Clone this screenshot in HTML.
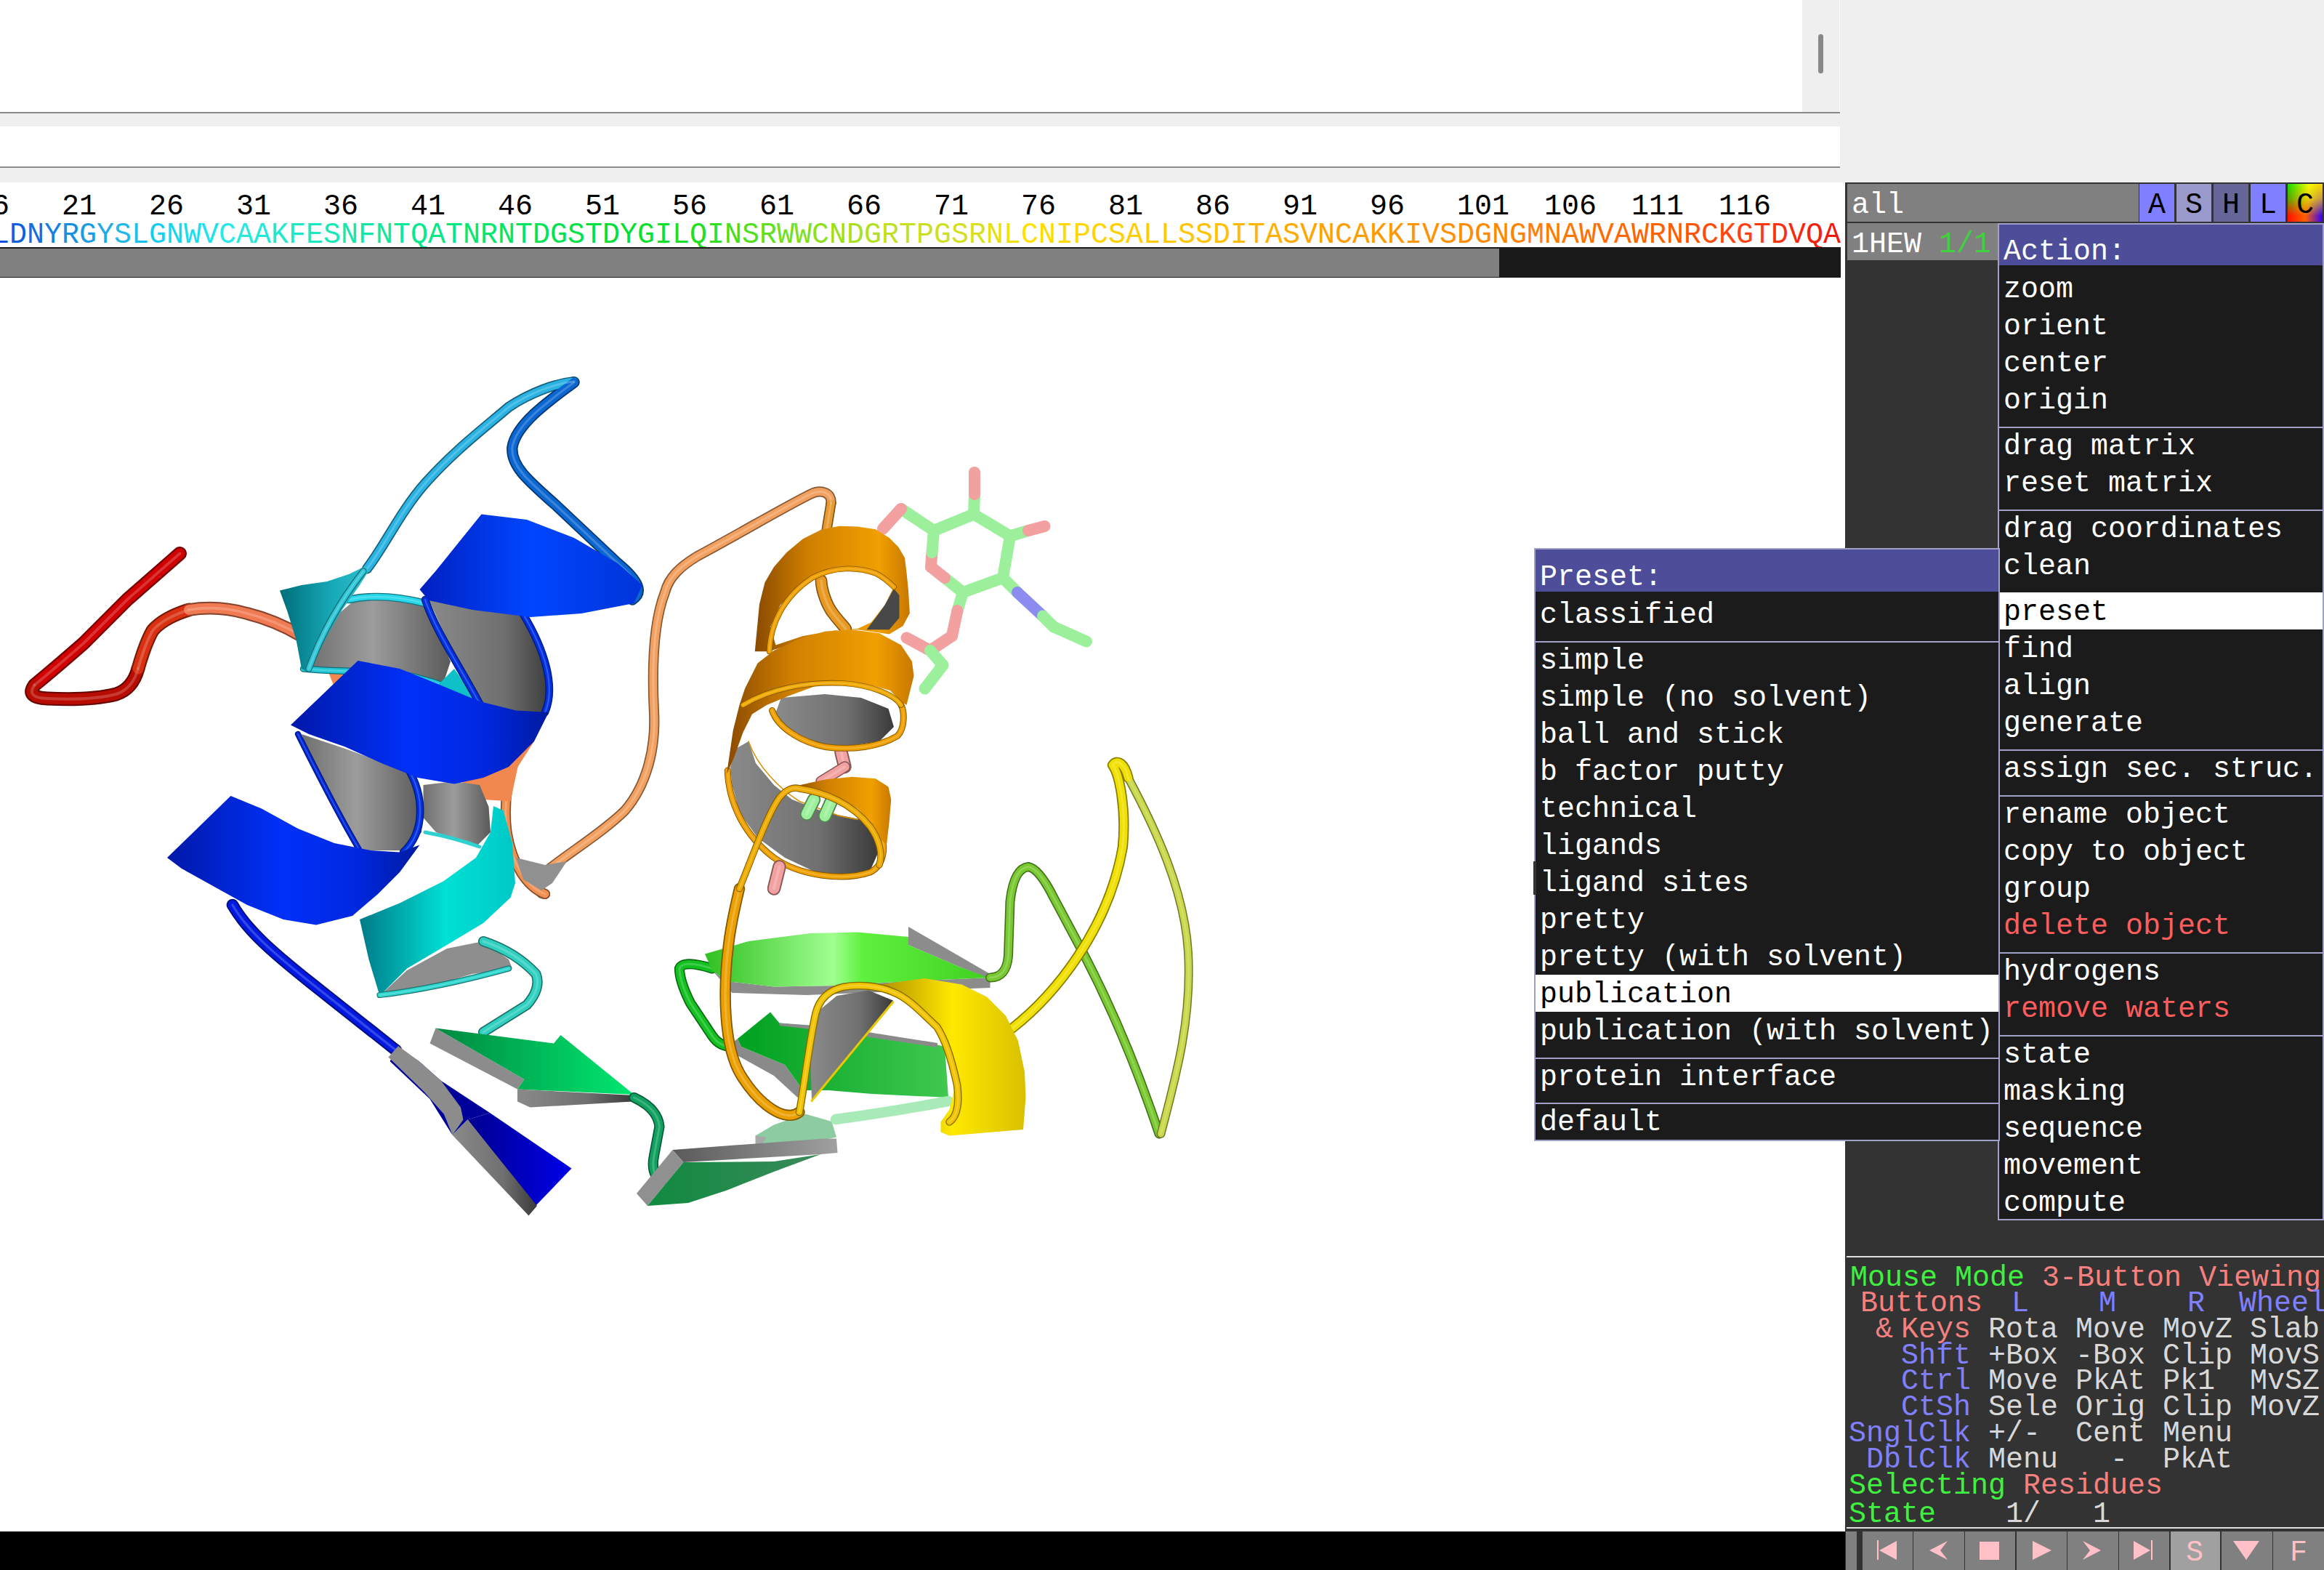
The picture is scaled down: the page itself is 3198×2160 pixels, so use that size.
<!DOCTYPE html><html><head><meta charset="utf-8"><style>
*{margin:0;padding:0;box-sizing:border-box}
html,body{width:3198px;height:2160px;overflow:hidden;background:#efefef}
.a{position:absolute}
.t{position:absolute;font-family:"Liberation Mono",monospace;font-size:40px;line-height:40px;white-space:pre;height:40px}
</style></head><body><div class="a" style="left:0;top:0;width:2480px;height:154px;background:#fff"></div><div class="a" style="left:2480px;top:0;width:51px;height:154px;background:#efefef"></div><div class="a" style="left:2531px;top:0;width:1px;height:154px;background:#fff"></div><div class="a" style="left:2502px;top:47px;width:7px;height:54px;background:#888;border-radius:4px"></div><div class="a" style="left:0;top:154px;width:2532px;height:2px;background:#8a8a8a"></div><div class="a" style="left:0;top:174px;width:2532px;height:55px;background:#fff"></div><div class="a" style="left:0;top:229px;width:2532px;height:2px;background:#8a8a8a"></div><div class="a" style="left:0;top:251px;width:2539px;height:1856px;background:#fff"></div><div class="t" style="left:-35px;top:265px;color:#000;">16</div><div class="t" style="left:85px;top:265px;color:#000;">21</div><div class="t" style="left:205px;top:265px;color:#000;">26</div><div class="t" style="left:325px;top:265px;color:#000;">31</div><div class="t" style="left:445px;top:265px;color:#000;">36</div><div class="t" style="left:565px;top:265px;color:#000;">41</div><div class="t" style="left:685px;top:265px;color:#000;">46</div><div class="t" style="left:805px;top:265px;color:#000;">51</div><div class="t" style="left:925px;top:265px;color:#000;">56</div><div class="t" style="left:1045px;top:265px;color:#000;">61</div><div class="t" style="left:1165px;top:265px;color:#000;">66</div><div class="t" style="left:1285px;top:265px;color:#000;">71</div><div class="t" style="left:1405px;top:265px;color:#000;">76</div><div class="t" style="left:1525px;top:265px;color:#000;">81</div><div class="t" style="left:1645px;top:265px;color:#000;">86</div><div class="t" style="left:1765px;top:265px;color:#000;">91</div><div class="t" style="left:1885px;top:265px;color:#000;">96</div><div class="t" style="left:2005px;top:265px;color:#000;">101</div><div class="t" style="left:2125px;top:265px;color:#000;">106</div><div class="t" style="left:2245px;top:265px;color:#000;">111</div><div class="t" style="left:2365px;top:265px;color:#000;">116</div><div class="t" style="left:-11px;top:304px;color:rgb(10,80,224);">L</div><div class="t" style="left:13px;top:304px;color:rgb(13,96,224);">D</div><div class="t" style="left:37px;top:304px;color:rgb(17,112,224);">N</div><div class="t" style="left:61px;top:304px;color:rgb(20,128,224);">Y</div><div class="t" style="left:85px;top:304px;color:rgb(24,144,224);">R</div><div class="t" style="left:109px;top:304px;color:rgb(26,157,226);">G</div><div class="t" style="left:133px;top:304px;color:rgb(29,170,229);">Y</div><div class="t" style="left:157px;top:304px;color:rgb(32,184,232);">S</div><div class="t" style="left:181px;top:304px;color:rgb(26,194,234);">L</div><div class="t" style="left:205px;top:304px;color:rgb(21,205,237);">G</div><div class="t" style="left:229px;top:304px;color:rgb(16,216,240);">N</div><div class="t" style="left:253px;top:304px;color:rgb(24,221,237);">W</div><div class="t" style="left:277px;top:304px;color:rgb(32,226,234);">V</div><div class="t" style="left:301px;top:304px;color:rgb(40,232,232);">C</div><div class="t" style="left:325px;top:304px;color:rgb(37,232,224);">A</div><div class="t" style="left:349px;top:304px;color:rgb(34,232,216);">A</div><div class="t" style="left:373px;top:304px;color:rgb(31,232,208);">K</div><div class="t" style="left:397px;top:304px;color:rgb(28,232,200);">F</div><div class="t" style="left:421px;top:304px;color:rgb(25,232,192);">E</div><div class="t" style="left:445px;top:304px;color:rgb(22,232,184);">S</div><div class="t" style="left:469px;top:304px;color:rgb(20,232,176);">N</div><div class="t" style="left:493px;top:304px;color:rgb(17,232,168);">F</div><div class="t" style="left:517px;top:304px;color:rgb(14,232,160);">N</div><div class="t" style="left:541px;top:304px;color:rgb(11,232,152);">T</div><div class="t" style="left:565px;top:304px;color:rgb(8,232,144);">Q</div><div class="t" style="left:589px;top:304px;color:rgb(5,232,136);">A</div><div class="t" style="left:613px;top:304px;color:rgb(2,232,128);">T</div><div class="t" style="left:637px;top:304px;color:rgb(0,232,120);">N</div><div class="t" style="left:661px;top:304px;color:rgb(0,231,112);">R</div><div class="t" style="left:685px;top:304px;color:rgb(0,230,104);">N</div><div class="t" style="left:709px;top:304px;color:rgb(0,229,96);">T</div><div class="t" style="left:733px;top:304px;color:rgb(0,228,88);">D</div><div class="t" style="left:757px;top:304px;color:rgb(0,227,80);">G</div><div class="t" style="left:781px;top:304px;color:rgb(0,226,72);">S</div><div class="t" style="left:805px;top:304px;color:rgb(0,225,64);">T</div><div class="t" style="left:829px;top:304px;color:rgb(0,224,56);">D</div><div class="t" style="left:853px;top:304px;color:rgb(0,224,48);">Y</div><div class="t" style="left:877px;top:304px;color:rgb(8,224,44);">G</div><div class="t" style="left:901px;top:304px;color:rgb(16,224,40);">I</div><div class="t" style="left:925px;top:304px;color:rgb(24,224,36);">L</div><div class="t" style="left:949px;top:304px;color:rgb(32,224,32);">Q</div><div class="t" style="left:973px;top:304px;color:rgb(48,224,32);">I</div><div class="t" style="left:997px;top:304px;color:rgb(64,224,32);">N</div><div class="t" style="left:1021px;top:304px;color:rgb(80,224,32);">S</div><div class="t" style="left:1045px;top:304px;color:rgb(96,224,32);">R</div><div class="t" style="left:1069px;top:304px;color:rgb(112,224,32);">W</div><div class="t" style="left:1093px;top:304px;color:rgb(128,224,32);">W</div><div class="t" style="left:1117px;top:304px;color:rgb(140,224,32);">C</div><div class="t" style="left:1141px;top:304px;color:rgb(153,224,32);">N</div><div class="t" style="left:1165px;top:304px;color:rgb(166,224,32);">D</div><div class="t" style="left:1189px;top:304px;color:rgb(179,224,32);">G</div><div class="t" style="left:1213px;top:304px;color:rgb(192,224,32);">R</div><div class="t" style="left:1237px;top:304px;color:rgb(196,224,32);">T</div><div class="t" style="left:1261px;top:304px;color:rgb(201,224,32);">P</div><div class="t" style="left:1285px;top:304px;color:rgb(206,224,32);">G</div><div class="t" style="left:1309px;top:304px;color:rgb(211,224,32);">S</div><div class="t" style="left:1333px;top:304px;color:rgb(216,224,32);">R</div><div class="t" style="left:1357px;top:304px;color:rgb(229,224,21);">N</div><div class="t" style="left:1381px;top:304px;color:rgb(242,224,10);">L</div><div class="t" style="left:1405px;top:304px;color:rgb(255,224,0);">C</div><div class="t" style="left:1429px;top:304px;color:rgb(255,220,0);">N</div><div class="t" style="left:1453px;top:304px;color:rgb(255,217,0);">I</div><div class="t" style="left:1477px;top:304px;color:rgb(255,214,0);">P</div><div class="t" style="left:1501px;top:304px;color:rgb(255,211,0);">C</div><div class="t" style="left:1525px;top:304px;color:rgb(255,208,0);">S</div><div class="t" style="left:1549px;top:304px;color:rgb(255,205,0);">A</div><div class="t" style="left:1573px;top:304px;color:rgb(255,202,0);">L</div><div class="t" style="left:1597px;top:304px;color:rgb(255,200,0);">L</div><div class="t" style="left:1621px;top:304px;color:rgb(255,197,0);">S</div><div class="t" style="left:1645px;top:304px;color:rgb(255,194,0);">S</div><div class="t" style="left:1669px;top:304px;color:rgb(255,192,0);">D</div><div class="t" style="left:1693px;top:304px;color:rgb(255,186,0);">I</div><div class="t" style="left:1717px;top:304px;color:rgb(255,181,0);">T</div><div class="t" style="left:1741px;top:304px;color:rgb(255,176,0);">A</div><div class="t" style="left:1765px;top:304px;color:rgb(255,170,0);">S</div><div class="t" style="left:1789px;top:304px;color:rgb(255,165,0);">V</div><div class="t" style="left:1813px;top:304px;color:rgb(255,160,0);">N</div><div class="t" style="left:1837px;top:304px;color:rgb(255,158,0);">C</div><div class="t" style="left:1861px;top:304px;color:rgb(255,156,0);">A</div><div class="t" style="left:1885px;top:304px;color:rgb(255,154,0);">K</div><div class="t" style="left:1909px;top:304px;color:rgb(255,152,0);">K</div><div class="t" style="left:1933px;top:304px;color:rgb(255,149,0);">I</div><div class="t" style="left:1957px;top:304px;color:rgb(255,146,0);">V</div><div class="t" style="left:1981px;top:304px;color:rgb(255,143,0);">S</div><div class="t" style="left:2005px;top:304px;color:rgb(255,140,0);">D</div><div class="t" style="left:2029px;top:304px;color:rgb(255,137,0);">G</div><div class="t" style="left:2053px;top:304px;color:rgb(255,134,0);">N</div><div class="t" style="left:2077px;top:304px;color:rgb(255,131,0);">G</div><div class="t" style="left:2101px;top:304px;color:rgb(255,128,0);">M</div><div class="t" style="left:2125px;top:304px;color:rgb(255,122,0);">N</div><div class="t" style="left:2149px;top:304px;color:rgb(255,117,0);">A</div><div class="t" style="left:2173px;top:304px;color:rgb(255,112,0);">W</div><div class="t" style="left:2197px;top:304px;color:rgb(255,108,0);">V</div><div class="t" style="left:2221px;top:304px;color:rgb(255,104,0);">A</div><div class="t" style="left:2245px;top:304px;color:rgb(255,100,0);">W</div><div class="t" style="left:2269px;top:304px;color:rgb(255,96,0);">R</div><div class="t" style="left:2293px;top:304px;color:rgb(255,89,3);">N</div><div class="t" style="left:2317px;top:304px;color:rgb(255,83,6);">R</div><div class="t" style="left:2341px;top:304px;color:rgb(255,76,9);">C</div><div class="t" style="left:2365px;top:304px;color:rgb(255,70,12);">K</div><div class="t" style="left:2389px;top:304px;color:rgb(255,64,16);">G</div><div class="t" style="left:2413px;top:304px;color:rgb(252,56,16);">T</div><div class="t" style="left:2437px;top:304px;color:rgb(249,48,16);">D</div><div class="t" style="left:2461px;top:304px;color:rgb(246,41,16);">V</div><div class="t" style="left:2485px;top:304px;color:rgb(243,33,16);">Q</div><div class="t" style="left:2509px;top:304px;color:rgb(240,26,16);">A</div><div class="a" style="left:0;top:340px;width:2533px;height:42px;background:#1a1a1a"></div><div class="a" style="left:0;top:342px;width:2063px;height:39px;background:#808080"></div><div class="a" style="left:0;top:2107px;width:2539px;height:53px;background:#000"></div><svg class="a" style="left:0;top:0" width="3198" height="2160" viewBox="0 0 3198 2160">
<defs>
<linearGradient id="gBlue" x1="0" y1="0" x2="1" y2="0">
 <stop offset="0" stop-color="#0018a8"/><stop offset="0.45" stop-color="#0030f8"/><stop offset="0.75" stop-color="#0028e0"/><stop offset="1" stop-color="#001aa0"/></linearGradient>
<linearGradient id="gBlue2" x1="0" y1="0" x2="1" y2="0">
 <stop offset="0" stop-color="#0020c0"/><stop offset="0.5" stop-color="#0046ff"/><stop offset="1" stop-color="#0034d8"/></linearGradient>
<linearGradient id="gGrey" x1="0" y1="0" x2="1" y2="0">
 <stop offset="0" stop-color="#707070"/><stop offset="0.45" stop-color="#9c9c9c"/><stop offset="1" stop-color="#5a5a5a"/></linearGradient>
<linearGradient id="gGreyD" x1="0" y1="0" x2="1" y2="0">
 <stop offset="0" stop-color="#8a8a8a"/><stop offset="0.6" stop-color="#707070"/><stop offset="1" stop-color="#3a3a3a"/></linearGradient>
<linearGradient id="gCyan" x1="0" y1="0" x2="1" y2="0">
 <stop offset="0" stop-color="#007a88"/><stop offset="0.55" stop-color="#00e0d4"/><stop offset="1" stop-color="#00c8c8"/></linearGradient>
<linearGradient id="gTeal" x1="0" y1="0" x2="1" y2="0">
 <stop offset="0" stop-color="#006e7a"/><stop offset="0.6" stop-color="#18aab8"/><stop offset="1" stop-color="#30c0d0"/></linearGradient>
<linearGradient id="gOrange" x1="0" y1="0" x2="1" y2="0">
 <stop offset="0" stop-color="#8a4a00"/><stop offset="0.35" stop-color="#d08000"/><stop offset="0.8" stop-color="#f0a000"/><stop offset="1" stop-color="#c87800"/></linearGradient>
<linearGradient id="gYellow" x1="0" y1="0" x2="1" y2="0">
 <stop offset="0" stop-color="#b09000"/><stop offset="0.5" stop-color="#ffe800"/><stop offset="1" stop-color="#d8c000"/></linearGradient>
<linearGradient id="gGreen1" x1="0" y1="0" x2="1" y2="0">
 <stop offset="0" stop-color="#30c020"/><stop offset="0.45" stop-color="#a0ff90"/><stop offset="0.55" stop-color="#60f040"/><stop offset="1" stop-color="#40d020"/></linearGradient>
<linearGradient id="gGreen2" x1="0" y1="0" x2="1" y2="0">
 <stop offset="0" stop-color="#00a020"/><stop offset="1" stop-color="#40c850"/></linearGradient>
<linearGradient id="gGreen3" x1="0" y1="0" x2="1" y2="0">
 <stop offset="0" stop-color="#008840"/><stop offset="1" stop-color="#00e870"/></linearGradient>
<linearGradient id="gNavy" x1="0" y1="0" x2="1" y2="0"><stop offset="0" stop-color="#000090"/><stop offset="1" stop-color="#0000e8"/></linearGradient>
<linearGradient id="gGreyL" x1="0" y1="0" x2="1" y2="0"><stop offset="0" stop-color="#5a5a5a"/><stop offset="1" stop-color="#a0a0a0"/></linearGradient>
<linearGradient id="gGreen4" x1="0" y1="0" x2="1" y2="0"><stop offset="0" stop-color="#108a40"/><stop offset="1" stop-color="#3a8a5a"/></linearGradient>
<linearGradient id="gRed" x1="0" y1="0" x2="1" y2="0">
 <stop offset="0" stop-color="#a00000"/><stop offset="0.2" stop-color="#c00000"/><stop offset="0.45" stop-color="#e03010"/><stop offset="0.7" stop-color="#f07050"/><stop offset="1" stop-color="#f08858"/></linearGradient>
</defs>
<g transform="translate(0,480) scale(0.5)"><path d="M 2287,425 C 2290,395 2260,385 2230,400 C 2150,440 2050,500 1920,570 C 1870,600 1840,630 1830,670 C 1795,760 1795,900 1800,1000 C 1805,1100 1780,1200 1720,1270 C 1660,1330 1560,1390 1500,1440 C 1470,1470 1480,1500 1500,1500" fill="none" stroke="#855834" stroke-width="28.4" stroke-linecap="round" stroke-linejoin="round"/><path d="M 2325,765 C 2290,740 2265,700 2262,640 C 2262,560 2280,470 2287,425" fill="none" stroke="#7f541a" stroke-width="28.4" stroke-linecap="round" stroke-linejoin="round"/><path d="M 2287,425 C 2290,395 2260,385 2230,400 C 2150,440 2050,500 1920,570 C 1870,600 1840,630 1830,670 C 1795,760 1795,900 1800,1000 C 1805,1100 1780,1200 1720,1270 C 1660,1330 1560,1390 1500,1440 C 1470,1470 1480,1500 1500,1500" fill="none" stroke="#f2a060" stroke-width="21.647999999999996" stroke-linecap="round" stroke-linejoin="round"/><path d="M 2325,765 C 2290,740 2265,700 2262,640 C 2262,560 2280,470 2287,425" fill="none" stroke="#e89a30" stroke-width="21.647999999999996" stroke-linecap="round" stroke-linejoin="round"/><path d="M 2287,425 C 2290,395 2260,385 2230,400 C 2150,440 2050,500 1920,570 C 1870,600 1840,630 1830,670 C 1795,760 1795,900 1800,1000 C 1805,1100 1780,1200 1720,1270 C 1660,1330 1560,1390 1500,1440 C 1470,1470 1480,1500 1500,1500" fill="none" stroke="#f8cfaf" stroke-width="5.808" stroke-linecap="round" stroke-linejoin="round" opacity="0.4"/><path d="M 2325,765 C 2290,740 2265,700 2262,640 C 2262,560 2280,470 2287,425" fill="none" stroke="#f3cc97" stroke-width="5.808" stroke-linecap="round" stroke-linejoin="round" opacity="0.4"/><path d="M 1500,1500 C 1450,1480 1410,1420 1395,1330 C 1385,1250 1395,1150 1450,1060" fill="none" stroke="#844f2c" stroke-width="28.4" stroke-linecap="round" stroke-linejoin="round"/><path d="M 1500,1500 C 1450,1480 1410,1420 1395,1330 C 1385,1250 1395,1150 1450,1060" fill="none" stroke="#f09050" stroke-width="21.647999999999996" stroke-linecap="round" stroke-linejoin="round"/><path d="M 1500,1500 C 1450,1480 1410,1420 1395,1330 C 1385,1250 1395,1150 1450,1060" fill="none" stroke="#f7c7a7" stroke-width="5.808" stroke-linecap="round" stroke-linejoin="round" opacity="0.4"/><polygon points="1420,1400 1500,1420 1560,1410 1520,1470 1490,1490 1440,1460" fill="#909090" /><polygon points="1270,1190 1350,1120 1455,1050 1470,1080 1425,1150 1405,1245 1330,1240" fill="#f08850" /><polygon points="900,880 960,880 990,960 1030,1000 960,1000 920,930" fill="#f08850" /><path d="M 495,563 L 350,690 L 230,810 Q 150,880 95,925" fill="none" stroke="#720000" stroke-width="38.0" stroke-linecap="round" stroke-linejoin="round"/><path d="M 95,925 Q 70,960 130,962 Q 250,968 320,950 Q 365,935 380,880" fill="none" stroke="#650600" stroke-width="38.0" stroke-linecap="round" stroke-linejoin="round"/><path d="M 380,880 Q 400,810 420,775 Q 450,740 520,718" fill="none" stroke="#761a08" stroke-width="38.0" stroke-linecap="round" stroke-linejoin="round"/><path d="M 520,718 Q 600,705 680,728 Q 760,748 830,790" fill="none" stroke="#84432d" stroke-width="35.6" stroke-linecap="round" stroke-linejoin="round"/><path d="M 495,563 L 350,690 L 230,810 Q 150,880 95,925" fill="none" stroke="#d00000" stroke-width="29.52" stroke-linecap="round" stroke-linejoin="round"/><path d="M 95,925 Q 70,960 130,962 Q 250,968 320,950 Q 365,935 380,880" fill="none" stroke="#b80c00" stroke-width="29.52" stroke-linecap="round" stroke-linejoin="round"/><path d="M 380,880 Q 400,810 420,775 Q 450,740 520,718" fill="none" stroke="#d83010" stroke-width="29.52" stroke-linecap="round" stroke-linejoin="round"/><path d="M 520,718 Q 600,705 680,728 Q 760,748 830,790" fill="none" stroke="#f07a52" stroke-width="27.552" stroke-linecap="round" stroke-linejoin="round"/><path d="M 495,563 L 350,690 L 230,810 Q 150,880 95,925" fill="none" stroke="#e77f7f" stroke-width="7.92" stroke-linecap="round" stroke-linejoin="round" opacity="0.4"/><path d="M 95,925 Q 70,960 130,962 Q 250,968 320,950 Q 365,935 380,880" fill="none" stroke="#db857f" stroke-width="7.92" stroke-linecap="round" stroke-linejoin="round" opacity="0.4"/><path d="M 380,880 Q 400,810 420,775 Q 450,740 520,718" fill="none" stroke="#eb9787" stroke-width="7.92" stroke-linecap="round" stroke-linejoin="round" opacity="0.4"/><path d="M 520,718 Q 600,705 680,728 Q 760,748 830,790" fill="none" stroke="#f7bca8" stroke-width="7.392" stroke-linecap="round" stroke-linejoin="round" opacity="0.4"/><path d="M 1010,605 C 1060,540 1100,450 1170,370 C 1250,280 1330,220 1400,160 C 1460,120 1530,95 1580,90" fill="none" stroke="#17617c" stroke-width="28.4" stroke-linecap="round" stroke-linejoin="round"/><path d="M 1580,92 C 1500,150 1420,210 1410,270 C 1405,320 1450,360 1530,430 L 1700,590 C 1760,640 1770,670 1740,690" fill="none" stroke="#053872" stroke-width="30.799999999999997" stroke-linecap="round" stroke-linejoin="round"/><path d="M 1010,605 C 1060,540 1100,450 1170,370 C 1250,280 1330,220 1400,160 C 1460,120 1530,95 1580,90" fill="none" stroke="#2ab2e2" stroke-width="21.647999999999996" stroke-linecap="round" stroke-linejoin="round"/><path d="M 1580,92 C 1500,150 1420,210 1410,270 C 1405,320 1450,360 1530,430 L 1700,590 C 1760,640 1770,670 1740,690" fill="none" stroke="#0a66d0" stroke-width="23.615999999999996" stroke-linecap="round" stroke-linejoin="round"/><path d="M 1010,605 C 1060,540 1100,450 1170,370 C 1250,280 1330,220 1400,160 C 1460,120 1530,95 1580,90" fill="none" stroke="#94d8f0" stroke-width="5.808" stroke-linecap="round" stroke-linejoin="round" opacity="0.4"/><path d="M 1580,92 C 1500,150 1420,210 1410,270 C 1405,320 1450,360 1530,430 L 1700,590 C 1760,640 1770,670 1740,690" fill="none" stroke="#84b2e7" stroke-width="6.335999999999999" stroke-linecap="round" stroke-linejoin="round" opacity="0.4"/><polygon points="850,880 880,800 930,730 990,680 1080,680 1170,700 1200,770 1240,860 1220,920 1150,900 1050,880 950,880" fill="url(#gGrey)" /><path d="M 960,690 Q 1050,670 1170,700" fill="none" stroke="#167680" stroke-width="21.2" stroke-linecap="round" stroke-linejoin="round"/><path d="M 960,690 Q 1050,670 1170,700" fill="none" stroke="#28d8ea" stroke-width="15.743999999999998" stroke-linecap="round" stroke-linejoin="round"/><path d="M 960,690 Q 1050,670 1170,700" fill="none" stroke="#93ebf4" stroke-width="4.224" stroke-linecap="round" stroke-linejoin="round" opacity="0.4"/><path d="M 835,880 Q 950,890 1050,885 Q 1150,900 1230,930" fill="none" stroke="#126e76" stroke-width="18.8" stroke-linecap="round" stroke-linejoin="round"/><path d="M 835,880 Q 950,890 1050,885 Q 1150,900 1230,930" fill="none" stroke="#22c8d8" stroke-width="13.776" stroke-linecap="round" stroke-linejoin="round"/><path d="M 835,880 Q 950,890 1050,885 Q 1150,900 1230,930" fill="none" stroke="#90e3eb" stroke-width="3.696" stroke-linecap="round" stroke-linejoin="round" opacity="0.4"/><polygon points="770,665 830,650 900,640 960,620 1005,598 1015,610 990,650 940,720 900,790 870,850 850,890 830,880 815,800 790,720" fill="url(#gTeal)" /><path d="M 1000,612 Q 900,740 850,880" fill="none" stroke="#1a6e76" stroke-width="18.8" stroke-linecap="round" stroke-linejoin="round"/><path d="M 1000,612 Q 900,740 850,880" fill="none" stroke="#30c8d8" stroke-width="13.776" stroke-linecap="round" stroke-linejoin="round"/><path d="M 1000,612 Q 900,740 850,880" fill="none" stroke="#97e3eb" stroke-width="3.696" stroke-linecap="round" stroke-linejoin="round" opacity="0.4"/><polygon points="1195,935 1250,880 1300,950 1345,1010 1280,1005" fill="#10c0c8" /><polygon points="1180,690 1300,710 1440,730 1490,820 1520,930 1500,1000 1420,1005 1330,990 1280,900 1230,800" fill="url(#gGreyD)" /><polygon points="1165,1200 1250,1190 1320,1200 1345,1260 1350,1330 1310,1370 1200,1330 1165,1290" fill="url(#gGrey)" /><path d="M 1170,1330 Q 1250,1345 1320,1370" fill="none" stroke="#30d0d0" stroke-width="10" stroke-linecap="round" stroke-linejoin="round" /><polygon points="830,1060 950,1100 1060,1140 1130,1160 1165,1250 1160,1330 1120,1380 1000,1380 930,1270 870,1160" fill="url(#gGrey)" /><path d="M 1170,690 C 1200,780 1270,880 1330,995" fill="none" stroke="#001a7b" stroke-width="21.2" stroke-linecap="round" stroke-linejoin="round"/><path d="M 1170,690 C 1200,780 1270,880 1330,995" fill="none" stroke="#0030e0" stroke-width="15.743999999999998" stroke-linecap="round" stroke-linejoin="round"/><path d="M 1170,690 C 1200,780 1270,880 1330,995" fill="none" stroke="#7f97ef" stroke-width="4.224" stroke-linecap="round" stroke-linejoin="round" opacity="0.4"/><path d="M 1440,730 C 1500,830 1530,930 1500,1000" fill="none" stroke="#001a7b" stroke-width="21.2" stroke-linecap="round" stroke-linejoin="round"/><path d="M 1440,730 C 1500,830 1530,930 1500,1000" fill="none" stroke="#0030e0" stroke-width="15.743999999999998" stroke-linecap="round" stroke-linejoin="round"/><path d="M 1440,730 C 1500,830 1530,930 1500,1000" fill="none" stroke="#7f97ef" stroke-width="4.224" stroke-linecap="round" stroke-linejoin="round" opacity="0.4"/><path d="M 1120,1150 C 1170,1230 1170,1330 1110,1385" fill="none" stroke="#001a7b" stroke-width="21.2" stroke-linecap="round" stroke-linejoin="round"/><path d="M 1120,1150 C 1170,1230 1170,1330 1110,1385" fill="none" stroke="#0030e0" stroke-width="15.743999999999998" stroke-linecap="round" stroke-linejoin="round"/><path d="M 1120,1150 C 1170,1230 1170,1330 1110,1385" fill="none" stroke="#7f97ef" stroke-width="4.224" stroke-linecap="round" stroke-linejoin="round" opacity="0.4"/><path d="M 820,1060 C 870,1160 930,1280 990,1380" fill="none" stroke="#001676" stroke-width="16.4" stroke-linecap="round" stroke-linejoin="round"/><path d="M 820,1060 C 870,1160 930,1280 990,1380" fill="none" stroke="#0028d8" stroke-width="11.807999999999998" stroke-linecap="round" stroke-linejoin="round"/><path d="M 820,1060 C 870,1160 930,1280 990,1380" fill="none" stroke="#7f93eb" stroke-width="3.1679999999999997" stroke-linecap="round" stroke-linejoin="round" opacity="0.4"/><polygon points="1155,662 1200,610 1325,455 1450,470 1580,520 1700,590 1768,650 1745,700 1600,728 1460,738 1300,718 1180,692" fill="url(#gBlue2)" /><polygon points="800,1035 985,858 1100,880 1200,920 1320,970 1420,995 1510,1000 1470,1080 1400,1150 1330,1180 1250,1197 1150,1180 1050,1140 950,1095 850,1060" fill="url(#gBlue)" /></g><g transform="translate(200,1000) scale(0.5)"><polygon points="60,360 235,190 320,225 420,280 520,320 620,340 700,345 755,325 700,400 640,460 570,520 470,545 380,530 280,490 190,440 100,390" fill="url(#gBlue)" /><path d="M 240,490 C 280,560 350,620 450,700 L 690,890" fill="none" stroke="#000d7b" stroke-width="33.2" stroke-linecap="round" stroke-linejoin="round"/><path d="M 240,490 C 280,560 350,620 450,700 L 690,890" fill="none" stroke="#0018e0" stroke-width="25.584" stroke-linecap="round" stroke-linejoin="round"/><path d="M 240,490 C 280,560 350,620 450,700 L 690,890" fill="none" stroke="#7f8bef" stroke-width="6.864" stroke-linecap="round" stroke-linejoin="round" opacity="0.4"/><polygon points="673,920 783,1024 845,1123 887,1081 948,1062 814,974 753,920 696,882" fill="#00009a" /><polygon points="887,1081 948,1062 1173,1215 1074,1318" fill="url(#gNavy)" /><polygon points="845,1123 887,1081 1078,1318 1055,1345" fill="url(#gGreyD)" /><polygon points="669,909 696,878 753,920 814,974 868,1047 875,1081 845,1123 822,1066 768,1005" fill="#8c8c8c" /><polygon points="650,735 720,670 830,610 930,590 1000,640 1010,665 900,680 760,720" fill="#8e8e8e" /><polygon points="590,530 700,485 820,425 910,360 950,290 958,218 985,230 1010,320 1018,430 1005,470 930,540 830,600 720,665 645,740 615,640" fill="url(#gCyan)" /><path d="M 645,738 Q 800,720 1000,665" fill="none" stroke="#1a7672" stroke-width="16.4" stroke-linecap="round" stroke-linejoin="round"/><path d="M 645,738 Q 800,720 1000,665" fill="none" stroke="#30d8d0" stroke-width="11.807999999999998" stroke-linecap="round" stroke-linejoin="round"/><path d="M 645,738 Q 800,720 1000,665" fill="none" stroke="#97ebe7" stroke-width="3.1679999999999997" stroke-linecap="round" stroke-linejoin="round" opacity="0.4"/><path d="M 930,590 Q 1020,620 1075,680 Q 1090,720 1050,765 L 930,840" fill="none" stroke="#1a7269" stroke-width="28.4" stroke-linecap="round" stroke-linejoin="round"/><path d="M 930,590 Q 1020,620 1075,680 Q 1090,720 1050,765 L 930,840" fill="none" stroke="#30d0c0" stroke-width="21.647999999999996" stroke-linecap="round" stroke-linejoin="round"/><path d="M 930,590 Q 1020,620 1075,680 Q 1090,720 1050,765 L 930,840" fill="none" stroke="#97e7df" stroke-width="5.808" stroke-linecap="round" stroke-linejoin="round" opacity="0.4"/><polygon points="783,871 799,829 1043,970 1024,997" fill="#8c8c8c" /><polygon points="1024,997 1345,1014 1341,1031 1059,1047 1024,1031" fill="url(#gGreyD)" /><polygon points="799,829 1124,871 1143,848 1345,1012 1024,997 1043,970" fill="url(#gGreen3)" /><path d="M 1345,1020 Q 1410,1050 1415,1100 L 1400,1180 Q 1390,1230 1420,1250" fill="none" stroke="#085834" stroke-width="28.4" stroke-linecap="round" stroke-linejoin="round"/><path d="M 1345,1020 Q 1410,1050 1415,1100 L 1400,1180 Q 1390,1230 1420,1250" fill="none" stroke="#10a060" stroke-width="21.647999999999996" stroke-linecap="round" stroke-linejoin="round"/><path d="M 1345,1020 Q 1410,1050 1415,1100 L 1400,1180 Q 1390,1230 1420,1250" fill="none" stroke="#87cfaf" stroke-width="5.808" stroke-linecap="round" stroke-linejoin="round" opacity="0.4"/><polygon points="1679,1125 1730,1095 1816,1065 1889,1086 1902,1129 1859,1138 1730,1151 1687,1155" fill="#8ccca0" /><polygon points="1679,1125 1709,1129 1696,1155 1679,1155" fill="#a8a8a8" /><polygon points="1451,1164 1868,1133 1902,1133 1905,1172 1859,1176 1481,1198" fill="url(#gGreyL)" /><polygon points="1352,1284 1451,1164 1481,1198 1382,1318" fill="#909090" /><polygon points="1382,1318 1481,1198 1730,1196 1859,1176 1730,1224 1601,1275 1494,1310" fill="url(#gGreen4)" /></g><g transform="translate(900,1000) scale(0.5)"><path d="M 160,665 Q 80,640 70,665 Q 70,700 100,760 L 160,850 Q 180,880 215,880" fill="none" stroke="#096911" stroke-width="28.4" stroke-linecap="round" stroke-linejoin="round"/><path d="M 160,665 Q 80,640 70,665 Q 70,700 100,760 L 160,850 Q 180,880 215,880" fill="none" stroke="#12c020" stroke-width="21.647999999999996" stroke-linecap="round" stroke-linejoin="round"/><path d="M 160,665 Q 80,640 70,665 Q 70,700 100,760 L 160,850 Q 180,880 215,880" fill="none" stroke="#88df8f" stroke-width="5.808" stroke-linecap="round" stroke-linejoin="round" opacity="0.4"/><polygon points="195,885 230,858 240,880 360,930 410,1000 395,1020 330,960" fill="#8a8a8a" /><polygon points="230,858 320,785 345,815 500,830 780,875 800,880 810,1020 600,1010 480,1000 410,1000 360,930 240,880" fill="url(#gGreen2)" /><polygon points="345,815 500,826 780,870 780,882 500,840 345,822" fill="#8a8a8a" /><path d="M 810,1030 Q 650,1060 500,1080" fill="none" stroke="#a8eab8" stroke-width="28.799999999999997" stroke-linecap="round" stroke-linejoin="round" /><polygon points="160,670 200,700 330,715 500,712 700,700 925,690 925,718 720,726 420,738 215,732" fill="#8c8c8c" /><polygon points="140,625 260,590 430,568 560,565 700,578 700,600 840,660 925,690 700,700 500,712 330,715 200,700 160,670" fill="url(#gGreen1)" /><polygon points="700,550 925,680 925,692 840,660 700,600" fill="#8c8c8c" /><path d="M 925,690 Q 970,690 975,630 L 980,480 Q 990,390 1030,385 Q 1060,390 1100,470 L 1180,620 Q 1300,850 1390,1120" fill="none" stroke="#426e1a" stroke-width="26.0" stroke-linecap="round" stroke-linejoin="round"/><path d="M 925,690 Q 970,690 975,630 L 980,480 Q 990,390 1030,385 Q 1060,390 1100,470 L 1180,620 Q 1300,850 1390,1120" fill="none" stroke="#78c830" stroke-width="19.68" stroke-linecap="round" stroke-linejoin="round"/><path d="M 925,690 Q 970,690 975,630 L 980,480 Q 990,390 1030,385 Q 1060,390 1100,470 L 1180,620 Q 1300,850 1390,1120" fill="none" stroke="#bbe397" stroke-width="5.28" stroke-linecap="round" stroke-linejoin="round" opacity="0.4"/><path d="M 1305,140 C 1380,280 1460,450 1470,620 C 1480,800 1440,950 1395,1120" fill="none" stroke="#6e7627" stroke-width="23.599999999999998" stroke-linecap="round" stroke-linejoin="round"/><path d="M 985,830 C 1100,740 1250,560 1290,330 C 1300,220 1280,130 1262,105 C 1275,88 1295,100 1305,140" fill="none" stroke="#847b00" stroke-width="28.4" stroke-linecap="round" stroke-linejoin="round"/><path d="M 1305,140 C 1380,280 1460,450 1470,620 C 1480,800 1440,950 1395,1120" fill="none" stroke="#c8d848" stroke-width="17.711999999999996" stroke-linecap="round" stroke-linejoin="round"/><path d="M 985,830 C 1100,740 1250,560 1290,330 C 1300,220 1280,130 1262,105 C 1275,88 1295,100 1305,140" fill="none" stroke="#f0e000" stroke-width="21.647999999999996" stroke-linecap="round" stroke-linejoin="round"/><path d="M 1305,140 C 1380,280 1460,450 1470,620 C 1480,800 1440,950 1395,1120" fill="none" stroke="#e3eba3" stroke-width="4.752" stroke-linecap="round" stroke-linejoin="round" opacity="0.4"/><path d="M 985,830 C 1100,740 1250,560 1290,330 C 1300,220 1280,130 1262,105 C 1275,88 1295,100 1305,140" fill="none" stroke="#f7ef7f" stroke-width="5.808" stroke-linecap="round" stroke-linejoin="round" opacity="0.4"/><path d="M 235,445 C 222,500 212,540 205,600 C 190,720 190,880 240,960 C 290,1040 360,1090 400,1060" fill="none" stroke="#815800" stroke-width="30.799999999999997" stroke-linecap="round" stroke-linejoin="round"/><path d="M 235,445 C 222,500 212,540 205,600 C 190,720 190,880 240,960 C 290,1040 360,1090 400,1060" fill="none" stroke="#eca000" stroke-width="23.615999999999996" stroke-linecap="round" stroke-linejoin="round"/><path d="M 235,445 C 222,500 212,540 205,600 C 190,720 190,880 240,960 C 290,1040 360,1090 400,1060" fill="none" stroke="#f5cf7f" stroke-width="6.335999999999999" stroke-linecap="round" stroke-linejoin="round" opacity="0.4"/><polygon points="445,788 503,740 590,725 658,753 434,1029 430,900" fill="url(#gGreyD)" /><path d="M 434,1029 L 658,757" fill="none" stroke="#e8c800" stroke-width="6" stroke-linecap="round" stroke-linejoin="round" /><polygon points="620,709 744,692 847,709 916,743 968,795 1002,864 1020,950 1023,1019 1016,1108 813,1125 789,1115 789,1087 813,1053 830,984 813,915 779,840 727,785 668,743 620,726" fill="url(#gYellow)" /><path d="M 400,1060 C 415,980 425,880 445,788 C 455,750 480,725 520,716 C 560,708 620,712 658,730 C 700,745 740,790 779,826 C 800,860 815,900 834,984 C 840,1030 837,1070 813,1087" fill="none" stroke="#856b00" stroke-width="21.2" stroke-linecap="round" stroke-linejoin="round"/><path d="M 400,1060 C 415,980 425,880 445,788 C 455,750 480,725 520,716 C 560,708 620,712 658,730 C 700,745 740,790 779,826 C 800,860 815,900 834,984 C 840,1030 837,1070 813,1087" fill="none" stroke="#f2c400" stroke-width="15.743999999999998" stroke-linecap="round" stroke-linejoin="round"/><path d="M 400,1060 C 415,980 425,880 445,788 C 455,750 480,725 520,716 C 560,708 620,712 658,730 C 700,745 740,790 779,826 C 800,860 815,900 834,984 C 840,1030 837,1070 813,1087" fill="none" stroke="#f8e17f" stroke-width="4.224" stroke-linecap="round" stroke-linejoin="round" opacity="0.4"/></g><g transform="translate(1000,480) scale(0.5)"><path d="M 570,500 L 680,455" fill="none" stroke="#9cf09c" stroke-width="32" stroke-linecap="round" stroke-linejoin="round" /><path d="M 680,455 L 780,515" fill="none" stroke="#9cf09c" stroke-width="32" stroke-linecap="round" stroke-linejoin="round" /><path d="M 780,515 L 760,630" fill="none" stroke="#9cf09c" stroke-width="32" stroke-linecap="round" stroke-linejoin="round" /><path d="M 760,630 L 650,670" fill="none" stroke="#9cf09c" stroke-width="32" stroke-linecap="round" stroke-linejoin="round" /><path d="M 650,670 L 600,630" fill="none" stroke="#9cf09c" stroke-width="32" stroke-linecap="round" stroke-linejoin="round" /><path d="M 600,630 L 562,600" fill="none" stroke="#f2a0a0" stroke-width="32" stroke-linecap="round" stroke-linejoin="round" /><path d="M 562,600 L 565,560" fill="none" stroke="#f2a0a0" stroke-width="32" stroke-linecap="round" stroke-linejoin="round" /><path d="M 565,560 L 570,500" fill="none" stroke="#9cf09c" stroke-width="32" stroke-linecap="round" stroke-linejoin="round" /><path d="M 570,500 L 480,440" fill="none" stroke="#9cf09c" stroke-width="32" stroke-linecap="round" stroke-linejoin="round" /><path d="M 480,440 L 430,495" fill="none" stroke="#f2a0a0" stroke-width="32" stroke-linecap="round" stroke-linejoin="round" /><path d="M 680,455 L 682,400" fill="none" stroke="#9cf09c" stroke-width="32" stroke-linecap="round" stroke-linejoin="round" /><path d="M 682,400 L 682,340" fill="none" stroke="#f2a0a0" stroke-width="32" stroke-linecap="round" stroke-linejoin="round" /><path d="M 780,515 L 830,500" fill="none" stroke="#9cf09c" stroke-width="32" stroke-linecap="round" stroke-linejoin="round" /><path d="M 830,500 L 875,488" fill="none" stroke="#f2a0a0" stroke-width="32" stroke-linecap="round" stroke-linejoin="round" /><path d="M 760,630 L 800,670" fill="none" stroke="#9cf09c" stroke-width="32" stroke-linecap="round" stroke-linejoin="round" /><path d="M 800,670 L 870,735" fill="none" stroke="#8c8cf0" stroke-width="32" stroke-linecap="round" stroke-linejoin="round" /><path d="M 870,735 L 900,765" fill="none" stroke="#9cf09c" stroke-width="32" stroke-linecap="round" stroke-linejoin="round" /><path d="M 900,765 L 990,805" fill="none" stroke="#9cf09c" stroke-width="32" stroke-linecap="round" stroke-linejoin="round" /><path d="M 650,670 L 635,720" fill="none" stroke="#9cf09c" stroke-width="32" stroke-linecap="round" stroke-linejoin="round" /><path d="M 635,720 L 620,790" fill="none" stroke="#f2a0a0" stroke-width="32" stroke-linecap="round" stroke-linejoin="round" /><path d="M 620,790 L 560,830" fill="none" stroke="#f2a0a0" stroke-width="32" stroke-linecap="round" stroke-linejoin="round" /><path d="M 560,830 L 495,795" fill="none" stroke="#f2a0a0" stroke-width="32" stroke-linecap="round" stroke-linejoin="round" /><path d="M 560,830 L 595,870" fill="none" stroke="#9cf09c" stroke-width="32" stroke-linecap="round" stroke-linejoin="round" /><path d="M 595,870 L 545,935" fill="none" stroke="#9cf09c" stroke-width="32" stroke-linecap="round" stroke-linejoin="round" /></g><g transform="translate(980,700) scale(0.125)"><polygon points="470,1570 520,1050 580,810 680,640 820,480 1000,330 1200,230 1400,190 1600,195 1800,225 1950,320 2050,420 2120,540 2140,700 2160,900 2175,1150 2100,1290 1950,1380 1600,1330 1400,1330 620,1570" fill="url(#gOrange)" /><polygon points="640,1300 750,1060 920,880 1100,760 1300,680 1500,650 1700,680 1850,740 2000,860 1900,1060 1750,1250 1600,1320 1400,1330 1000,1400 700,1500" fill="#ffffff" /><polygon points="2000,880 2060,950 2060,1200 1950,1330 1700,1330 1800,1200 1900,1060" fill="#484848" /><path d="M 1200,790 C 1205,900 1260,1060 1330,1150 C 1380,1220 1430,1270 1470,1320" fill="none" stroke="#7f5311" stroke-width="134.0" stroke-linecap="round" stroke-linejoin="round"/><path d="M 1200,790 C 1205,900 1260,1060 1330,1150 C 1380,1220 1430,1270 1470,1320" fill="none" stroke="#e89820" stroke-width="108.24" stroke-linecap="round" stroke-linejoin="round"/><path d="M 1200,790 C 1205,900 1260,1060 1330,1150 C 1380,1220 1430,1270 1470,1320" fill="none" stroke="#f3cb8f" stroke-width="29.04" stroke-linecap="round" stroke-linejoin="round" opacity="0.4"/><path d="M 630,1570 C 640,1250 800,960 1100,760 C 1350,630 1600,640 1800,710 C 1900,760 1980,840 2000,860" fill="none" stroke="#845800" stroke-width="62.0" stroke-linecap="round" stroke-linejoin="round"/><path d="M 630,1570 C 640,1250 800,960 1100,760 C 1350,630 1600,640 1800,710 C 1900,760 1980,840 2000,860" fill="none" stroke="#f0a000" stroke-width="49.199999999999996" stroke-linecap="round" stroke-linejoin="round"/><path d="M 630,1570 C 640,1250 800,960 1100,760 C 1350,630 1600,640 1800,710 C 1900,760 1980,840 2000,860" fill="none" stroke="#f7cf7f" stroke-width="13.2" stroke-linecap="round" stroke-linejoin="round" opacity="0.4"/></g><g transform="translate(960,830) scale(0.25)"><polygon points="210,800 280,760 320,880 420,1000 520,1080 700,1150 850,1180 950,1200 990,1300 990,1380 950,1470 800,1500 650,1480 480,1400 330,1290 230,1150 190,1000 180,900" fill="url(#gGreyD)" /><path d="M 280,760 C 330,900 450,1020 560,1090 L 780,1170 L 880,1190" fill="none" stroke="#d89000" stroke-width="6" stroke-linecap="round" stroke-linejoin="round" /><path d="M 165,920 C 170,1100 260,1280 420,1400 C 560,1500 800,1530 950,1480 C 1030,1440 1040,1330 1000,1250" fill="none" stroke="#845800" stroke-width="35.6" stroke-linecap="round" stroke-linejoin="round"/><path d="M 165,920 C 170,1100 260,1280 420,1400 C 560,1500 800,1530 950,1480 C 1030,1440 1040,1330 1000,1250" fill="none" stroke="#f0a000" stroke-width="27.552" stroke-linecap="round" stroke-linejoin="round"/><path d="M 165,920 C 170,1100 260,1280 420,1400 C 560,1500 800,1530 950,1480 C 1030,1440 1040,1330 1000,1250" fill="none" stroke="#f7cf7f" stroke-width="7.392" stroke-linecap="round" stroke-linejoin="round" opacity="0.4"/><path d="M 790,820 L 810,900" fill="none" stroke="#855858" stroke-width="74.0" stroke-linecap="round" stroke-linejoin="round"/><path d="M 790,820 L 810,900" fill="none" stroke="#f2a0a0" stroke-width="59.04" stroke-linecap="round" stroke-linejoin="round"/><path d="M 790,820 L 810,900" fill="none" stroke="#f8cfcf" stroke-width="15.84" stroke-linecap="round" stroke-linejoin="round" opacity="0.4"/><path d="M 810,900 L 680,980" fill="none" stroke="#855858" stroke-width="62.0" stroke-linecap="round" stroke-linejoin="round"/><path d="M 810,900 L 680,980" fill="none" stroke="#f2a0a0" stroke-width="49.199999999999996" stroke-linecap="round" stroke-linejoin="round"/><path d="M 810,900 L 680,980" fill="none" stroke="#f8cfcf" stroke-width="13.2" stroke-linecap="round" stroke-linejoin="round" opacity="0.4"/><path d="M 640,1080 L 600,1160" fill="none" stroke="#558455" stroke-width="74.0" stroke-linecap="round" stroke-linejoin="round"/><path d="M 640,1080 L 600,1160" fill="none" stroke="#9cf09c" stroke-width="59.04" stroke-linecap="round" stroke-linejoin="round"/><path d="M 640,1080 L 600,1160" fill="none" stroke="#cdf7cd" stroke-width="15.84" stroke-linecap="round" stroke-linejoin="round" opacity="0.4"/><path d="M 740,1080 L 700,1170" fill="none" stroke="#558455" stroke-width="74.0" stroke-linecap="round" stroke-linejoin="round"/><path d="M 740,1080 L 700,1170" fill="none" stroke="#9cf09c" stroke-width="59.04" stroke-linecap="round" stroke-linejoin="round"/><path d="M 740,1080 L 700,1170" fill="none" stroke="#cdf7cd" stroke-width="15.84" stroke-linecap="round" stroke-linejoin="round" opacity="0.4"/><path d="M 450,1450 L 420,1570" fill="none" stroke="#855858" stroke-width="74.0" stroke-linecap="round" stroke-linejoin="round"/><path d="M 450,1450 L 420,1570" fill="none" stroke="#f2a0a0" stroke-width="59.04" stroke-linecap="round" stroke-linejoin="round"/><path d="M 450,1450 L 420,1570" fill="none" stroke="#f8cfcf" stroke-width="15.84" stroke-linecap="round" stroke-linejoin="round" opacity="0.4"/><polygon points="460,520 700,500 900,520 1050,580 1080,680 1000,760 800,790 620,760 480,680 430,600" fill="url(#gGreyD)" /><path d="M 410,590 C 440,680 560,760 700,790 C 850,810 1000,790 1100,730 C 1140,690 1140,600 1120,560" fill="none" stroke="#845800" stroke-width="35.6" stroke-linecap="round" stroke-linejoin="round"/><path d="M 410,590 C 440,680 560,760 700,790 C 850,810 1000,790 1100,730 C 1140,690 1140,600 1120,560" fill="none" stroke="#f0a000" stroke-width="27.552" stroke-linecap="round" stroke-linejoin="round"/><path d="M 410,590 C 440,680 560,760 700,790 C 850,810 1000,790 1100,730 C 1140,690 1140,600 1120,560" fill="none" stroke="#f7cf7f" stroke-width="7.392" stroke-linecap="round" stroke-linejoin="round" opacity="0.4"/><polygon points="260,470 330,330 420,260 550,200 700,155 850,145 1000,165 1120,230 1180,320 1190,400 1150,560 1120,540 1060,480 950,450 800,440 650,455 500,510 380,560 300,610 250,710 200,850 160,940 195,700 230,560" fill="url(#gOrange)" /><path d="M 250,560 C 400,470 600,430 800,440 C 950,450 1080,500 1120,560" fill="none" stroke="#845c00" stroke-width="30.799999999999997" stroke-linecap="round" stroke-linejoin="round"/><path d="M 250,560 C 400,470 600,430 800,440 C 950,450 1080,500 1120,560" fill="none" stroke="#f0a800" stroke-width="23.615999999999996" stroke-linecap="round" stroke-linejoin="round"/><path d="M 250,560 C 400,470 600,430 800,440 C 950,450 1080,500 1120,560" fill="none" stroke="#f7d37f" stroke-width="6.335999999999999" stroke-linecap="round" stroke-linejoin="round" opacity="0.4"/><polygon points="520,1010 700,970 850,955 980,965 1050,1010 1065,1080 1055,1200 1040,1330 1000,1290 950,1200 880,1130 750,1060 600,1025" fill="url(#gOrange)" /><path d="M 230,1570 C 300,1400 380,1170 450,1070 C 490,1020 530,1010 560,1020 C 700,1040 850,1100 950,1230 C 1000,1300 1020,1380 1000,1440" fill="none" stroke="#825e00" stroke-width="38.0" stroke-linecap="round" stroke-linejoin="round"/><path d="M 230,1570 C 300,1400 380,1170 450,1070 C 490,1020 530,1010 560,1020 C 700,1040 850,1100 950,1230 C 1000,1300 1020,1380 1000,1440" fill="none" stroke="#eeac00" stroke-width="29.52" stroke-linecap="round" stroke-linejoin="round"/><path d="M 230,1570 C 300,1400 380,1170 450,1070 C 490,1020 530,1010 560,1020 C 700,1040 850,1100 950,1230 C 1000,1300 1020,1380 1000,1440" fill="none" stroke="#f6d57f" stroke-width="7.92" stroke-linecap="round" stroke-linejoin="round" opacity="0.4"/></g></svg><div class="a" style="left:2539px;top:251px;width:659px;height:1909px;background:#333"></div><div class="a" style="left:2542px;top:253px;width:401px;height:52px;background:#808080"></div><div class="a" style="left:2944px;top:253px;width:48px;height:52px;background:#7f7fff"></div><div class="t" style="left:2956px;top:263px;color:#000;">A</div><div class="a" style="left:2995px;top:253px;width:48px;height:52px;background:#9999cc"></div><div class="t" style="left:3007px;top:263px;color:#000;">S</div><div class="a" style="left:3046px;top:253px;width:48px;height:52px;background:#666699"></div><div class="t" style="left:3058px;top:263px;color:#000;">H</div><div class="a" style="left:3097px;top:253px;width:48px;height:52px;background:#7f7fff"></div><div class="t" style="left:3109px;top:263px;color:#000;">L</div><div class="a" style="left:3148px;top:253px;width:48px;height:52px;background:linear-gradient(to right,#ff1000,#ff6000 50%,#3000ff)"></div><div class="a" style="left:3148px;top:253px;width:48px;height:52px;background:linear-gradient(to right,#10e000,#f0ff00 60%,#ffd000);-webkit-mask-image:linear-gradient(to bottom,#000 0%,rgba(0,0,0,.7) 40%,transparent 85%)"></div><div class="t" style="left:3160px;top:263px;color:#000;">C</div><div class="t" style="left:2548px;top:263px;color:#fff;">all</div><div class="a" style="left:2542px;top:307px;width:208px;height:51px;background:#808080"></div><div class="t" style="left:2548px;top:317px;color:#fff;">1HEW <span style="color:#3fd23f">1/1</span></div><div class="a" style="left:2749px;top:307px;width:449px;height:1372px;background:#1b1b1b;border:2px solid #a0a0c8"></div><div class="a" style="left:2751px;top:309px;width:445px;height:56px;background:#4d4d99"></div><div class="t" style="left:2757px;top:327px;color:#fff;">Action:</div><div class="t" style="left:2757px;top:379px;color:#fff;">zoom</div><div class="t" style="left:2757px;top:430px;color:#fff;">orient</div><div class="t" style="left:2757px;top:481px;color:#fff;">center</div><div class="t" style="left:2757px;top:532px;color:#fff;">origin</div><div class="a" style="left:2749px;top:587px;width:449px;height:2px;background:#a0a0c8"></div><div class="t" style="left:2757px;top:595px;color:#fff;">drag matrix</div><div class="t" style="left:2757px;top:646px;color:#fff;">reset matrix</div><div class="a" style="left:2749px;top:701px;width:449px;height:2px;background:#a0a0c8"></div><div class="t" style="left:2757px;top:709px;color:#fff;">drag coordinates</div><div class="t" style="left:2757px;top:760px;color:#fff;">clean</div><div class="a" style="left:2749px;top:815px;width:449px;height:2px;background:#a0a0c8"></div><div class="a" style="left:2751px;top:815px;width:445px;height:51px;background:#fff"></div><div class="t" style="left:2757px;top:823px;color:#000;">preset</div><div class="t" style="left:2757px;top:874px;color:#fff;">find</div><div class="t" style="left:2757px;top:925px;color:#fff;">align</div><div class="t" style="left:2757px;top:976px;color:#fff;">generate</div><div class="a" style="left:2749px;top:1031px;width:449px;height:2px;background:#a0a0c8"></div><div class="t" style="left:2757px;top:1039px;color:#fff;">assign sec. struc.</div><div class="a" style="left:2749px;top:1094px;width:449px;height:2px;background:#a0a0c8"></div><div class="t" style="left:2757px;top:1102px;color:#fff;">rename object</div><div class="t" style="left:2757px;top:1153px;color:#fff;">copy to object</div><div class="t" style="left:2757px;top:1204px;color:#fff;">group</div><div class="t" style="left:2757px;top:1255px;color:#ff5c5c;">delete object</div><div class="a" style="left:2749px;top:1310px;width:449px;height:2px;background:#a0a0c8"></div><div class="t" style="left:2757px;top:1318px;color:#fff;">hydrogens</div><div class="t" style="left:2757px;top:1369px;color:#ff5c5c;">remove waters</div><div class="a" style="left:2749px;top:1424px;width:449px;height:2px;background:#a0a0c8"></div><div class="t" style="left:2757px;top:1432px;color:#fff;">state</div><div class="t" style="left:2757px;top:1483px;color:#fff;">masking</div><div class="t" style="left:2757px;top:1534px;color:#fff;">sequence</div><div class="t" style="left:2757px;top:1585px;color:#fff;">movement</div><div class="t" style="left:2757px;top:1636px;color:#fff;">compute</div><div class="a" style="left:2111px;top:754px;width:641px;height:816px;background:#1b1b1b;border:2px solid #a0a0c8"></div><div class="a" style="left:2113px;top:756px;width:637px;height:58px;background:#4d4d99"></div><div class="t" style="left:2119px;top:775px;color:#fff;">Preset:</div><div class="t" style="left:2119px;top:827px;color:#fff;">classified</div><div class="a" style="left:2111px;top:882px;width:641px;height:2px;background:#a0a0c8"></div><div class="t" style="left:2119px;top:890px;color:#fff;">simple</div><div class="t" style="left:2119px;top:941px;color:#fff;">simple (no solvent)</div><div class="t" style="left:2119px;top:992px;color:#fff;">ball and stick</div><div class="t" style="left:2119px;top:1043px;color:#fff;">b factor putty</div><div class="t" style="left:2119px;top:1094px;color:#fff;">technical</div><div class="t" style="left:2119px;top:1145px;color:#fff;">ligands</div><div class="t" style="left:2119px;top:1196px;color:#fff;">ligand sites</div><div class="t" style="left:2119px;top:1247px;color:#fff;">pretty</div><div class="t" style="left:2119px;top:1298px;color:#fff;">pretty (with solvent)</div><div class="a" style="left:2113px;top:1341px;width:637px;height:51px;background:#fff"></div><div class="t" style="left:2119px;top:1349px;color:#000;">publication</div><div class="t" style="left:2119px;top:1400px;color:#fff;">publication (with solvent)</div><div class="a" style="left:2111px;top:1455px;width:641px;height:2px;background:#a0a0c8"></div><div class="t" style="left:2119px;top:1463px;color:#fff;">protein interface</div><div class="a" style="left:2111px;top:1517px;width:641px;height:2px;background:#a0a0c8"></div><div class="t" style="left:2119px;top:1525px;color:#fff;">default</div><div class="a" style="left:2110px;top:1185px;width:4px;height:46px;background:#333"></div><div class="a" style="left:2541px;top:1728px;width:657px;height:2px;background:#e0e0e0"></div><div class="t" style="left:2546px;top:1739px;color:#40f040;">Mouse Mode </div><div class="t" style="left:2810px;top:1739px;color:#f58080;">3-Button Viewing</div><div class="t" style="left:2560px;top:1774px;color:#f58080;">Buttons</div><div class="t" style="left:2768px;top:1774px;color:#8080ff;">L</div><div class="t" style="left:2888px;top:1774px;color:#8080ff;">M</div><div class="t" style="left:3010px;top:1774px;color:#8080ff;">R</div><div class="t" style="left:3081px;top:1774px;color:#8080ff;">Wheel</div><div class="t" style="left:2581px;top:1810px;color:#f58080;">&amp;</div><div class="t" style="left:2616px;top:1810px;color:#f58080;">Keys</div><div class="t" style="left:2736px;top:1810px;color:#d8d8d8;">Rota Move MovZ Slab</div><div class="t" style="left:2616px;top:1846px;color:#8080ff;">Shft</div><div class="t" style="left:2736px;top:1846px;color:#d8d8d8;">+Box -Box Clip MovS</div><div class="t" style="left:2616px;top:1881px;color:#8080ff;">Ctrl</div><div class="t" style="left:2736px;top:1881px;color:#d8d8d8;">Move PkAt Pk1  MvSZ</div><div class="t" style="left:2616px;top:1917px;color:#8080ff;">CtSh</div><div class="t" style="left:2736px;top:1917px;color:#d8d8d8;">Sele Orig Clip MovZ</div><div class="t" style="left:2544px;top:1953px;color:#8080ff;">SnglClk</div><div class="t" style="left:2736px;top:1953px;color:#d8d8d8;">+/-  Cent Menu</div><div class="t" style="left:2568px;top:1989px;color:#8080ff;">DblClk</div><div class="t" style="left:2736px;top:1989px;color:#d8d8d8;">Menu   -  PkAt</div><div class="t" style="left:2544px;top:2025px;color:#40f040;">Selecting </div><div class="t" style="left:2784px;top:2025px;color:#f58080;">Residues</div><div class="t" style="left:2544px;top:2064px;color:#40f040;">State</div><div class="t" style="left:2760px;top:2064px;color:#d8d8d8;">1/   1</div><div class="a" style="left:2541px;top:2101px;width:657px;height:2px;background:#e0e0e0"></div><div class="a" style="left:2540px;top:2107px;width:15px;height:53px;background:#808080"></div><div class="a" style="left:2563px;top:2107px;width:69px;height:53px;background:#808080"></div><div class="a" style="left:2633px;top:2107px;width:70px;height:53px;background:#808080"></div><div class="a" style="left:2704px;top:2107px;width:69px;height:53px;background:#808080"></div><div class="a" style="left:2775px;top:2107px;width:69px;height:53px;background:#808080"></div><div class="a" style="left:2845px;top:2107px;width:70px;height:53px;background:#808080"></div><div class="a" style="left:2916px;top:2107px;width:69px;height:53px;background:#808080"></div><div class="a" style="left:2987px;top:2107px;width:68px;height:53px;background:#a0a0a0"></div><div class="a" style="left:3057px;top:2107px;width:70px;height:53px;background:#808080"></div><div class="a" style="left:3128px;top:2107px;width:70px;height:53px;background:#808080"></div><svg class="a" style="left:2563px;top:2107px" width="69" height="53" fill="#ffc0c8"><rect x="20" y="12" width="2" height="27"/><polygon points="23,26 47,13 47,39"/></svg><svg class="a" style="left:2633px;top:2107px" width="70" height="53" fill="#ffc0c8"><polygon points="22,26 47,13 37,26 47,39"/></svg><svg class="a" style="left:2704px;top:2107px" width="69" height="53" fill="#ffc0c8"><rect x="20" y="14" width="27" height="25"/></svg><svg class="a" style="left:2775px;top:2107px" width="69" height="53" fill="#ffc0c8"><polygon points="22,13 48,26 22,39"/></svg><svg class="a" style="left:2845px;top:2107px" width="70" height="53" fill="#ffc0c8"><polygon points="46,26 21,13 31,26 21,39"/></svg><svg class="a" style="left:2916px;top:2107px" width="69" height="53" fill="#ffc0c8"><polygon points="20,13 43,26 20,39"/><rect x="44" y="12" width="2" height="27"/></svg><svg class="a" style="left:3057px;top:2107px" width="70" height="53" fill="#ffc0c8"><polygon points="16,13 52,13 34,39"/></svg><div class="t" style="left:3008px;top:2117px;color:#ffc0c8;">S</div><div class="t" style="left:3151px;top:2117px;color:#ffc0c8;">F</div></body></html>
